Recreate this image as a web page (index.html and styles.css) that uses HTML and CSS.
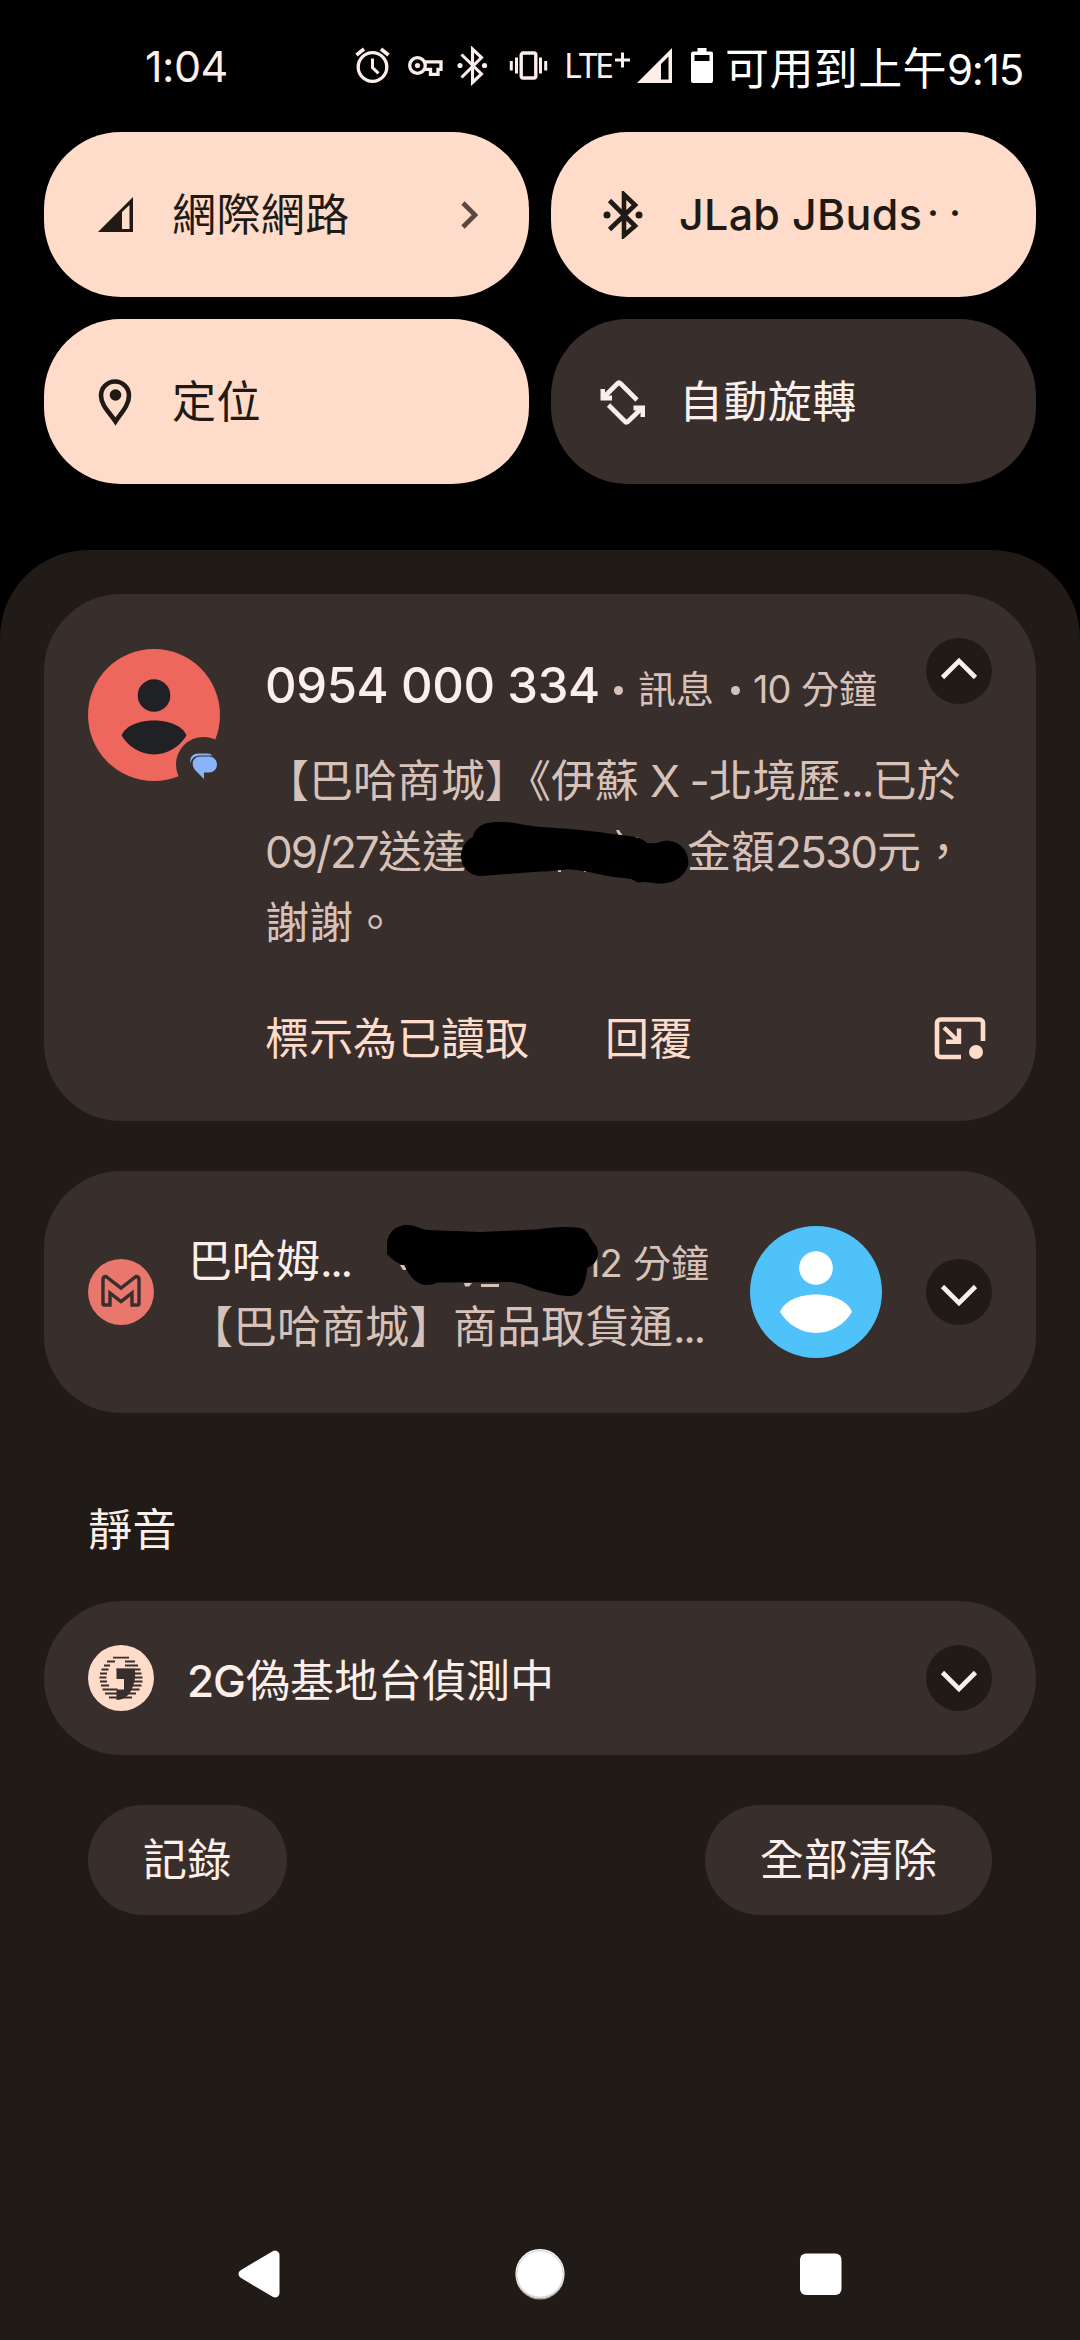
FILE: index.html
```html
<!DOCTYPE html>
<html lang="zh-Hant">
<head>
<meta charset="utf-8">
<title>通知</title>
<link rel="stylesheet" href="styles.css">
</head>
<body>
<div class="screen">
  <header class="status">
    <span class="clock">1:04</span>
    <svg class="status-icons" width="141" height="40" viewBox="354 46 141 40" fill="none" stroke="currentColor">
      <circle cx="372.500" cy="67" r="14.300" stroke-width="3.300"/>
      <path d="M372.500 58.500v9l6 5.800" stroke-width="3"/>
      <path d="M356.500 55l7.500-6M388.500 55l-7.500-6" stroke-width="3.600"/>
      <circle cx="417.500" cy="65.500" r="7.800" stroke-width="3.300"/>
      <circle cx="417.500" cy="65.500" r="2.600" fill="currentColor" stroke="none"/>
      <path d="M424.500 61.800h16.500v7.500h-3v5h-7.500v-5h-6" stroke-width="3.300"/>
      <path d="M461.500 54.500l20 19.500-9 8.500V49l9 8.500-20 20" stroke-width="3.100"/>
      <circle cx="460" cy="65.500" r="2.600" fill="currentColor" stroke="none"/><circle cx="484.500" cy="65.500" r="2.600" fill="currentColor" stroke="none"/>
    </svg>
    <svg class="vibrate" width="40" height="32" viewBox="0 0 40 32" fill="none" stroke="currentColor" stroke-width="3.400">
      <rect x="12.200" y="3" width="14.600" height="25" rx="2"/>
      <path d="M7.500 7.500v16M31.500 7.500v16M2.300 11v9.500M36.700 11v9.500" stroke-width="3"/>
    </svg>
    <span class="lte">LTE</span>
    <svg class="plus" width="15" height="32" viewBox="0 0 15 32"><path d="M0 10h15M7.500 2.500v15" stroke="currentColor" stroke-width="3"/></svg>
    <svg class="signal" width="35" height="35" viewBox="0 0 35 35"><path fill-rule="evenodd" fill="currentColor" d="M0 35L35 0v35zM24 16v15.500h7.500V8.500z"/></svg>
    <svg class="battery" width="22" height="35" viewBox="0 0 22 35"><path fill-rule="evenodd" fill="#fff" d="M6.500 0h9v3.500H20a2 2 0 0 1 2 2V33a2 2 0 0 1-2 2H2a2 2 0 0 1-2-2V5.500a2 2 0 0 1 2-2h4.500zM3.500 7v6h15V7z"/></svg>
    <span class="estimate">可用到上午<span class="estimate-time">9:15</span></span>
  </header>

  <section class="tiles">
    <div class="tile on">
      <svg class="tile-icon" width="48" height="48" viewBox="0 0 48 48"><path fill-rule="evenodd" fill="currentColor" d="M6 41L41 6v35zM30 21v17h7.500V14z"/></svg>
      <span class="tile-label">網際網路</span>
      <svg class="tile-arrow" width="18" height="30" viewBox="0 0 18 30"><path d="M3 3l12 12L3 27" fill="none" stroke="#5b4740" stroke-width="4.600"/></svg>
    </div>
    <div class="tile on">
      <svg class="tile-icon" width="48" height="48" viewBox="0 0 48 48"><path d="M10.500 9.500L36 35 25 44.500V3.500L36 14 10.500 38.500" fill="none" stroke="currentColor" stroke-width="4.600"/><circle cx="8" cy="24" r="3.500" fill="currentColor"/><circle cx="40" cy="24" r="3.500" fill="currentColor"/></svg>
      <span class="tile-label latin">JLab JBuds<span class="cut">‥</span></span>
    </div>
    <div class="tile on">
      <svg class="tile-icon" width="48" height="48" viewBox="0 0 48 48"><path d="M24 43.500C19 35.500 9.500 28 9.500 17.500a14 14 0 0 1 28 0C37.500 28 29 35.500 24 43.500z" transform="translate(-.5 0)" fill="none" stroke="currentColor" stroke-width="4.600"/><circle cx="23.500" cy="17" r="5.800" fill="currentColor"/></svg>
      <span class="tile-label">定位</span>
    </div>
    <div class="tile">
      <svg class="tile-icon" width="48" height="48" viewBox="0 0 48 48"><g fill="none" stroke="currentColor" stroke-width="4.600"><path d="M38 22L21.500 5.500c-.9-.9-2-.9-3 0L5 19"/><path d="M9.500 27L26 43.500c.9.900 2 .9 3 0L42 31"/></g><path fill="currentColor" d="M1.500 11h4.500v6.500h7v5H1.500zM46 39h-4.500v-6.500h-7v-5H46z"/></svg>
      <span class="tile-label">自動旋轉</span>
    </div>
  </section>

  <main class="shade">
    <article class="card message">
      <div class="avatar red">
        <svg width="132" height="132" viewBox="0 0 132 132"><circle cx="66" cy="66" r="66" fill="#ee675c"/><circle cx="66" cy="46.500" r="16.300" fill="#202124"/><path d="M33.500 86.500C37 77 51 71.500 66 71.500S95 77 98.500 86.500C92 97 80 105.500 66 105.500S40 97 33.500 86.500z" fill="#202124"/></svg>
        <svg class="badge" width="55" height="55" viewBox="0 0 55 55"><circle cx="27.500" cy="27.500" r="27.500" fill="#382e2c"/><path d="M14.500 27c-1-7 2-10.500 8-10.500h8c3 0 5 .8 6 2H24c-6 0-9 4-9.500 8.500z" fill="#8ab4f8"/><path d="M24.500 19.500h8.500a8 8 0 0 1 0 16h-5V42l-8-8c-6-6-3.500-14.500 4.500-14.500z" fill="#8ab4f8"/></svg>
      </div>
      <div class="message-main">
        <h2 class="message-head"><span class="sender">0954 000 334</span><i class="dot"></i><span class="app">訊息</span><i class="dot"></i><span class="ago"><span class="ago-num">10</span>分鐘</span></h2>
        <p class="message-body">【巴哈商城】《伊蘇<span class="lat-x"> X -</span>北境歷<span class="ell">...</span>已於<br><span class="num-date">09/27</span>送達<span class="hidden-gap"></span>金額<span class="num-amount">2530</span>元，<br>謝謝。</p>
        <div class="actions"><span>標示為已讀取</span><span>回覆</span></div>
      </div>
      <div class="message-side">
        <span class="toggle"><svg width="66" height="66" viewBox="0 0 66 66"><path d="M16.500 39.500L33 23l16.500 16.500" fill="none" stroke="currentColor" stroke-width="4.600"/></svg></span>
        <svg class="bubble" width="52" height="44" viewBox="0 0 52 44"><path d="M27 40H6.500a3.500 3.500 0 0 1-3.500-3.500V6a3.500 3.500 0 0 1 3.500-3.500h39A3.500 3.500 0 0 1 49 6v18" fill="none" stroke="currentColor" stroke-width="4.600"/><path d="M10 10.500l13.500 13M25 11.500v13.300H12" fill="none" stroke="currentColor" stroke-width="4.400"/><circle cx="42" cy="35" r="7" fill="currentColor"/></svg>
      </div>
      <svg class="scribble-a" width="232" height="66" viewBox="458 820 232 66"><g fill="#d7c2b9"><path d="M616 830l3 0 4 6h-4zM635 837h3v2h-3zM558 869h3v3h-3zM584 870h2v2h-2z"/></g><path d="M461 856C461 848 466 840 473 837 474 829 482 823 491 822.500 500 821.500 512 822 522 824.500L540 827 C565 828.500 585 830 609 833.500L633 836.500Q642 838 647 843 657 844 661 841.500C674 838 688 847 688.500 862 688 874 675 884 660 883.500 650 883.500 648 881 640 882.500 634 882 633 878 628 878.500 606 877 590 871 571 869.500 560 869.500 552 871.500 540 871.500L482 876C470 876.500 461 867 461 856z" fill="#000"/></svg>
    </article>

    <article class="card mail">
      <svg class="app-icon" width="66" height="66" viewBox="0 0 66 66"><circle cx="33" cy="33" r="33" fill="#e8776e"/><path d="M15 20.500Q15 17.500 18 17.500L33 29 48 17.500Q51 17.500 51 20.500V44.500Q51 46 49.500 46H44V34L33 42.500 22 34V46H16.500Q15 46 15 44.500z" fill="none" stroke="#382e2c" stroke-width="3.400"/></svg>
      <div class="mail-main">
        <div class="mail-head"><span class="mail-title">巴哈姆<span class="ell">...</span></span><span class="ago"><span class="ago-num">12</span>分鐘</span></div>
        <div class="mail-text">【巴哈商城】商品取貨通<span class="ell">...</span></div>
      </div>
      <svg class="avatar" width="132" height="132" viewBox="0 0 132 132"><circle cx="66" cy="66" r="66" fill="#4fc3f9"/><circle cx="66" cy="42" r="16.800" fill="#fff"/><path d="M30 86C34 75 49 68.500 66 68.500S98 75 102 86C95 98 81 107 66 107S37 98 30 86z" fill="#fff"/></svg>
      <span class="toggle"><svg width="66" height="66" viewBox="0 0 66 66"><path d="M16.500 27.500L33 44l16.500-16.500" fill="none" stroke="currentColor" stroke-width="4.600"/></svg></span>
      <svg class="scribble-b" width="216" height="76" viewBox="385 1223 216 76"><g fill="#d7c2b9"><path d="M400 1265h6v5h-3zM464 1283h8l-3 3.500h-4zM481 1284h18v3h-18z"/></g><path d="M387 1245C387 1233 396 1225 407 1225 416 1225 420 1229 428 1230L480 1232 537 1229.500C552 1227 566 1226 581 1228 589 1231 590 1238 593 1242 601 1249 600 1263 587 1268 587 1274 586 1278 584.500 1282 582 1292 575 1297 567 1296 558 1296 551 1292 543 1291.500 530 1288 522 1283 510 1282L438 1282.500Q432 1285 425 1285C412 1283 407 1270 404 1265 400 1265 392 1260 387 1254 387 1245z" fill="#000"/></svg>
    </article>

    <h3 class="section-title">靜音</h3>

    <article class="card silent">
      <svg class="app-icon" width="66" height="66" viewBox="0 0 66 66"><circle cx="33" cy="33" r="33" fill="#ffdbc9"/>
        <g stroke="#382e2c" stroke-width="1.900"><path d="M25 12.600h16M19 16.500h8M37 16.500h10M16 20.500h6M37 20.500h13M13.500 24.500h7M28.500 24.500h24M12 28.500h7M45 28.500h8.500M11.500 32.500h7M46 32.500h8.500M12 36.500h7M46 36.500h8.500M13 40.500h8M43 40.500h10.500M14.500 44.500h15M40 44.500h11.500M17 48.500h31M21 52.500h23"/></g>
        <path d="M28.500 23.700h18c1.500 6 .5 14-3 21-3 6.500-8 10-15 10.300V44.500H36V34h-7.500z" fill="#382e2c"/></svg>
      <span class="silent-title"><span class="g2">2G</span>偽基地台偵測中</span>
      <span class="toggle"><svg width="66" height="66" viewBox="0 0 66 66"><path d="M16.500 27.500L33 44l16.500-16.500" fill="none" stroke="currentColor" stroke-width="4.600"/></svg></span>
    </article>

    <div class="footer"><span class="pill">記錄</span><span class="pill">全部清除</span></div>

    <nav class="nav">
      <svg width="50" height="56" viewBox="0 0 50 56"><path d="M8 27.500L40 8.500v38z" fill="#fff" stroke="#fff" stroke-width="9" stroke-linejoin="round" transform="translate(1 .500)"/></svg>
      <svg width="52" height="56" viewBox="0 0 52 56"><circle cx="26" cy="29" r="24.500" fill="#aaa5a2"/><circle cx="26" cy="27.500" r="24.500" fill="#fff"/><circle cx="26" cy="28" r="23.300" fill="none" stroke="#bbb" stroke-width=".8"/></svg>
      <svg width="50" height="56" viewBox="0 0 50 56"><rect x="4" y="7.500" width="41.500" height="41.500" rx="6" fill="#fff"/></svg>
    </nav>
  </main>
</div>
</body>
</html>
```
FILE: styles.css
```css
* { box-sizing: border-box; margin: 0; padding: 0; }
body { background: #000; }
.screen {
  width: 1080px; height: 2340px; display: flex; flex-direction: column;
  overflow: hidden; background: #000; color: #fceee8;
  font-family: Inter, "Noto Sans CJK TC", sans-serif; font-size: 44px; font-weight: 400;
}
.screen svg { display: block; flex: none; }
span { white-space: nowrap; }

.status { height: 132px; padding: 0 0 0 145px; display: flex; align-items: flex-start; line-height: 66px; }
.clock { width: 209px; padding-top: 33px; font-size: 43px; letter-spacing: -0.5px; }
.status-icons { margin-top: 46px; }
.vibrate { margin: 50px 0 0 14px; }
.lte { width: 51px; margin: 32px 0 0 15px; font-family: "Noto Sans", sans-serif; font-size: 34px; letter-spacing: -2.500px; }
.plus { margin-top: 50px; }
.signal { margin: 48px 0 0 7px; color: #fceee8; }
.battery { margin: 48px 0 0 19px; }
.estimate { margin: 36px 0 0 12px; color: #fff; letter-spacing: .4px; }
.estimate-time { font-size: 42px; letter-spacing: -1.200px; }

.tiles { display: grid; grid-template-columns: 485px 485px; gap: 22px; padding: 0 44px; height: 418px; align-content: start; }
.tile {
  height: 165px; border-radius: 77px; padding: 0 51px 0 48px; display: flex; align-items: center;
  background: #382e2c; color: #fceee8;
}
.tile.on { background: #ffdbc9; color: #201a16; }
.tile-label { flex: 1; margin-left: 32px; line-height: 60px; letter-spacing: .4px; }
.tile-label.latin { font-weight: 500; font-size: 43px; letter-spacing: .3px; padding-bottom: 4px; }
.cut { font: 400 44px/60px "Noto Sans CJK TC", sans-serif; }

.shade { flex: 1; background: #201b17; border-radius: 88px 88px 0 0; padding: 44px 44px 0; display: flex; flex-direction: column; }
.card { position: relative; background: #382e2c; border-radius: 77px; display: flex; width: 992px; }
.avatar { flex: none; width: 132px; height: 132px; }
.toggle { flex: none; width: 66px; height: 66px; border-radius: 50%; background: #201b17; }

.message { height: 527px; padding: 44px; }
.avatar.red { position: relative; margin-top: 11px; }
.badge { position: absolute; left: 88px; top: 88px; }
.message-main { flex: none; width: 661px; margin-left: 45px; }
.message-head { height: 108px; padding-top: 18px; display: flex; align-items: baseline; font-size: 38px; font-weight: 400; line-height: 60px; color: #d7c2b9; }
.sender { width: 349px; font-size: 49px; font-weight: 500; letter-spacing: -.4px; color: #fceee8; }
.dot { width: 9px; height: 9px; border-radius: 50%; background: #d7c2b9; transform: translateY(-8px); }
.app { width: 76px; margin: 0 17px 0 15px; }
.ago { color: #d7c2b9; font-size: 38px; }
.ago-num { display: inline-block; width: 48px; letter-spacing: -1px; }
.dot + .ago { margin-left: 13px; }
.message-body { height: 251px; line-height: 71px; color: #d7c2b9; white-space: nowrap; }
.lat-x { letter-spacing: -1.400px; }
.num-date { display: inline-block; width: 113px; letter-spacing: -2px; }
.num-amount { display: inline-block; width: 102px; letter-spacing: -1.800px; }
.hidden-gap { display: inline-block; width: 221px; }
.ell { letter-spacing: -2.400px; }
.message-body .ell { letter-spacing: -2px; }
.actions { display: flex; gap: 76px; line-height: 66px; color: #ffdbc9; padding-top: 9px; }
.message-side { flex: 1; display: flex; flex-direction: column; align-items: flex-end; color: #fceee8; }
.bubble { margin: 313px 6px 0 0; color: #ffdbc9; }
.scribble-a { position: absolute; left: 414px; top: 226px; }

.mail { height: 242px; margin-top: 50px; padding: 0 44px; align-items: center; }
.app-icon { margin-right: 34px; }
.mail-main { width: 562px; height: 132px; }
.mail-head { height: 66px; display: flex; align-items: baseline; line-height: 66px; padding-top: 2px; }
.mail-title { width: 397px; }
.mail-text { line-height: 66px; height: 66px; color: #d7c2b9; white-space: nowrap; padding-top: 2px; margin-left: 1px; }
.mail .toggle, .silent .toggle { margin-left: auto; }
.scribble-b { position: absolute; left: 341px; top: 52px; }

.section-title { height: 188px; padding: 84px 0 0 44px; font-size: 44px; font-weight: 400; line-height: 66px; letter-spacing: .4px; }
.silent { height: 154px; padding: 0 44px; align-items: center; }
.silent-title { line-height: 60px; padding-top: 5px; margin-left: -1px; font-weight: 400; }
.g2 { display: inline-block; width: 59px; font-weight: 500; letter-spacing: -1px; }
.footer { display: flex; justify-content: space-between; padding: 50px 44px 0; }
.pill { height: 110px; line-height: 110px; padding: 0 55px; border-radius: 55px; background: #382e2c; letter-spacing: .3px; }
.nav { margin-top: auto; height: 94px; padding: 0 190px; display: flex; justify-content: space-between; }
```
